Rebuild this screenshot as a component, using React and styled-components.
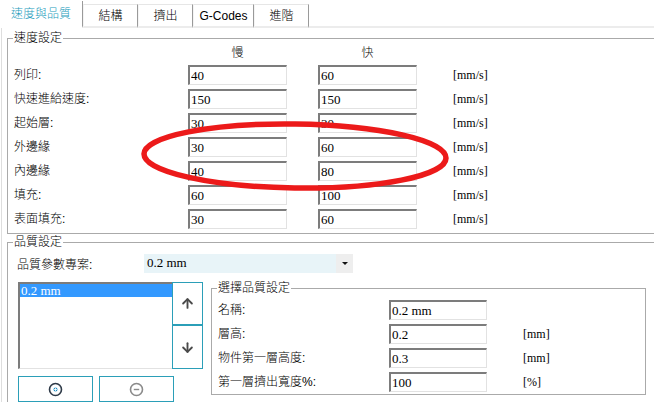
import React from 'react';
import styled, { createGlobalStyle, css } from 'styled-components';
import { ArrowUp, ArrowDown } from 'lucide-react';

const GlobalStyle = createGlobalStyle`
  html, body {
    margin: 0;
    padding: 0;
    background: #ffffff;
    overflow: hidden;
  }
  body {
    font-family: 'Liberation Sans', 'Noto Sans CJK TC', sans-serif;
    font-size: 12px;
    font-weight: 300;
    color: #000;
  }
`;

const Window = styled.div`
  position: relative;
  width: 654px;
  height: 402px;
  overflow: hidden;
  background: #fff;
`;

const TabBar = styled.div`
  display: flex;
  align-items: flex-end;
  height: 28px;
  box-sizing: border-box;
  border-bottom: 2px solid #ececec;
`;

const Tab = styled.div`
  box-sizing: border-box;
  display: flex;
  align-items: center;
  justify-content: center;
  width: ${({ w }) => w}px;
  height: 24px;
  margin-bottom: -2px;
  border-top: 1px solid #e6e6e6;
  border-left: 1px solid #f4f4f4;
  border-right: 1px solid #9a9a9a;
  border-bottom: 2px solid #ececec;
  font-size: 12px;
  line-height: 16px;
  padding-top: 1px;

  ${({ active }) =>
    active &&
    css`
      height: 27px;
      border-top: none;
      border-left: none;
      border-bottom: 2px solid #fff;
      color: #1c9cbc;
      padding-top: 0;
    `}
`;

const Panel = styled.div`
  margin-left: 1px;
  border-left: 1px solid #dedede;
  padding: 2px 0 0 5px;
  height: 380px;
`;

const Group = styled.fieldset`
  margin: 0;
  padding: 0 0 ${({ pb }) => pb ?? 4}px 6px;
  border: 1px solid #aaaaaa;
  width: ${({ w }) => w}px;
  box-sizing: border-box;
  min-width: 0;
`;

const Legend = styled.legend`
  margin-left: -1px;
  padding: 0 1px;
  font-size: 12px;
  line-height: 16px;
`;

const SpeedGrid = styled.div`
  display: grid;
  grid-template-columns: 174px 130px 135px auto;
  grid-auto-rows: 20px;
  grid-template-rows: 15px;
  row-gap: 4px;
  align-items: center;
`;

const ColHead = styled.div`
  width: 99px;
  text-align: center;
  line-height: 15px;
`;

const Label = styled.div`
  line-height: 16px;
  white-space: nowrap;
`;

const Field = styled.input`
  box-sizing: border-box;
  width: ${({ w }) => w ?? 99}px;
  height: 20px;
  margin: 0;
  padding: 0 0 0 1px;
  border-style: solid;
  border-width: 2px 1px 1px 2px;
  border-color: #7c7c7c #e2e2e2 #e2e2e2 #7c7c7c;
  background: #fff;
  font-family: 'Liberation Serif', serif;
  font-size: 13px;
  color: #000;
  outline: none;
`;

const Unit = styled.div`
  font-family: 'Liberation Serif', serif;
  font-size: 12px;
`;

const ComboRow = styled.div`
  display: flex;
  align-items: center;
  padding: 3px 0 0 3px;
  height: 20px;
`;

const ComboLabel = styled.div`
  width: 127px;
`;

const Combo = styled.div`
  display: flex;
  align-items: center;
  width: 209px;
  height: 19px;
  background: #e8f4f8;
  font-family: 'Liberation Serif', serif;
  font-size: 13px;
`;

const ComboText = styled.div`
  flex: 1;
  padding-left: 3px;
`;

const ComboButton = styled.div`
  display: flex;
  align-items: center;
  justify-content: center;
  width: 17px;
  height: 19px;
  background: #eeeeee;
`;

const Caret = styled.div`
  width: 0;
  height: 0;
  border-left: 3px solid transparent;
  border-right: 3px solid transparent;
  border-top: 3px solid #111;
`;

const QualityBody = styled.div`
  display: flex;
  align-items: flex-start;
  margin-top: 7px;
  padding-left: 4px;
`;

const LeftColumn = styled.div`
  display: flex;
  flex-direction: column;
  margin-top: 2px;
`;

const ListRow = styled.div`
  display: flex;
`;

const ListBox = styled.div`
  box-sizing: border-box;
  width: 155px;
  height: 87px;
  border-style: solid;
  border-width: 2px 1px 1px 2px;
  border-color: #7c7c7c #e2e2e2 #e2e2e2 #7c7c7c;
  background: #fff;
`;

const ListItem = styled.div`
  height: 13px;
  line-height: 13px;
  padding-left: 1px;
  background: ${({ selected }) => (selected ? '#3399ff' : 'transparent')};
  color: ${({ selected }) => (selected ? '#fff' : '#000')};
  font-family: 'Liberation Serif', serif;
  font-size: 13px;
`;

const ArrowStack = styled.div`
  display: flex;
  flex-direction: column;
  width: 31px;
  margin-left: -1px;
`;

const ArrowButton = styled.div`
  box-sizing: border-box;
  display: flex;
  align-items: center;
  justify-content: center;
  height: ${({ h }) => h}px;
  border: 1px solid #2b9fb8;
  ${({ top }) =>
    top &&
    css`
      border-bottom-width: 2px;
    `}
  ${({ bottom }) =>
    bottom &&
    css`
      border-top: none;
    `}
  background: #fff;
  color: #4a4a4a;
`;

const ButtonRow = styled.div`
  display: flex;
  gap: 6px;
  margin-top: 7px;
`;

const ActionButton = styled.div`
  box-sizing: border-box;
  display: flex;
  align-items: center;
  justify-content: center;
  width: 75px;
  height: 26px;
  border: 1px solid #2b9fb8;
  background: #fff;
`;

const InnerGroupWrap = styled.div`
  margin-left: 8px;
`;

const InnerGrid = styled.div`
  display: grid;
  grid-template-columns: 171px 134px auto;
  grid-auto-rows: 20px;
  row-gap: 4px;
  align-items: center;
  padding-top: 4px;
`;

const Ellipse = styled.svg`
  position: absolute;
  left: 0;
  top: 0;
  pointer-events: none;
`;

const CircleIcon = ({ color, plus }) => (
  <svg width="15" height="15" viewBox="0 0 15 15">
    <circle cx="7.5" cy="7.5" r="6" fill="none" stroke={color} strokeWidth="1.6" />
    {plus ? (
      <>
        <circle cx="7.5" cy="7.5" r="2" fill="#1f8fc4" />
        <path d="M7.5 5.8v3.4M5.8 7.5h3.4" stroke="#fff" strokeWidth="0.8" />
      </>
    ) : (
      <path d="M4.8 7.5h5.4" stroke={color} strokeWidth="1.4" />
    )}
  </svg>
);

const tabs = [
  { name: '速度與品質', w: 83 },
  { name: '結構', w: 55 },
  { name: '擠出', w: 55 },
  { name: 'G-Codes', w: 61 },
  { name: '進階', w: 55 },
];

const speeds = [
  ['列印:', '40', '60'],
  ['快速進給速度:', '150', '150'],
  ['起始層:', '30', '30'],
  ['外邊緣', '30', '60'],
  ['內邊緣', '40', '80'],
  ['填充:', '60', '100'],
  ['表面填充:', '30', '60'],
];

const quality = [
  ['名稱:', '0.2 mm', ''],
  ['層高:', '0.2', '[mm]'],
  ['物件第一層高度:', '0.3', '[mm]'],
  ['第一層擠出寬度%:', '100', '[%]'],
];

const App = () => (
  <Window>
    <GlobalStyle />
    <TabBar>
      {tabs.map((t, i) => (
        <Tab key={t.name} w={t.w} active={i === 0}>
          {t.name}
        </Tab>
      ))}
    </TabBar>
    <Panel>
      <Group w={700}>
        <Legend>速度設定</Legend>
        <SpeedGrid>
          <div />
          <ColHead>慢</ColHead>
          <ColHead>快</ColHead>
          <div />
          {speeds.map(([label, slow, fast]) => (
            <React.Fragment key={label}>
              <Label>{label}</Label>
              <Field readOnly value={slow} />
              <Field readOnly value={fast} />
              <Unit>[mm/s]</Unit>
            </React.Fragment>
          ))}
        </SpeedGrid>
      </Group>
      <Group w={700} pb={20}>
        <Legend>品質設定</Legend>
        <ComboRow>
          <ComboLabel>品質參數專案:</ComboLabel>
          <Combo>
            <ComboText>0.2 mm</ComboText>
            <ComboButton>
              <Caret />
            </ComboButton>
          </Combo>
        </ComboRow>
        <QualityBody>
          <LeftColumn>
            <ListRow>
              <ListBox>
                <ListItem selected>0.2 mm</ListItem>
              </ListBox>
              <ArrowStack>
                <ArrowButton h={44} top>
                  <ArrowUp size={15} strokeWidth={3} />
                </ArrowButton>
                <ArrowButton h={43} bottom>
                  <ArrowDown size={15} strokeWidth={3} />
                </ArrowButton>
              </ArrowStack>
            </ListRow>
            <ButtonRow>
              <ActionButton>
                <CircleIcon color="#2e3a48" plus />
              </ActionButton>
              <ActionButton>
                <CircleIcon color="#8a8a8a" />
              </ActionButton>
            </ButtonRow>
          </LeftColumn>
          <InnerGroupWrap>
            <Group w={435} pb={2}>
              <Legend>選擇品質設定</Legend>
              <InnerGrid>
                {quality.map(([label, value, unit]) => (
                  <React.Fragment key={label}>
                    <Label>{label}</Label>
                    <Field readOnly value={value} w={98} />
                    <Unit>{unit}</Unit>
                  </React.Fragment>
                ))}
              </InnerGrid>
            </Group>
          </InnerGroupWrap>
        </QualityBody>
      </Group>
    </Panel>
    <Ellipse width="654" height="402" viewBox="0 0 654 402">
      <ellipse
        cx="295"
        cy="156"
        rx="151"
        ry="32"
        fill="none"
        stroke="#ec1a1a"
        strokeWidth="5.5"
        transform="rotate(0.8 295 156)"
      />
    </Ellipse>
  </Window>
);

export default App;
